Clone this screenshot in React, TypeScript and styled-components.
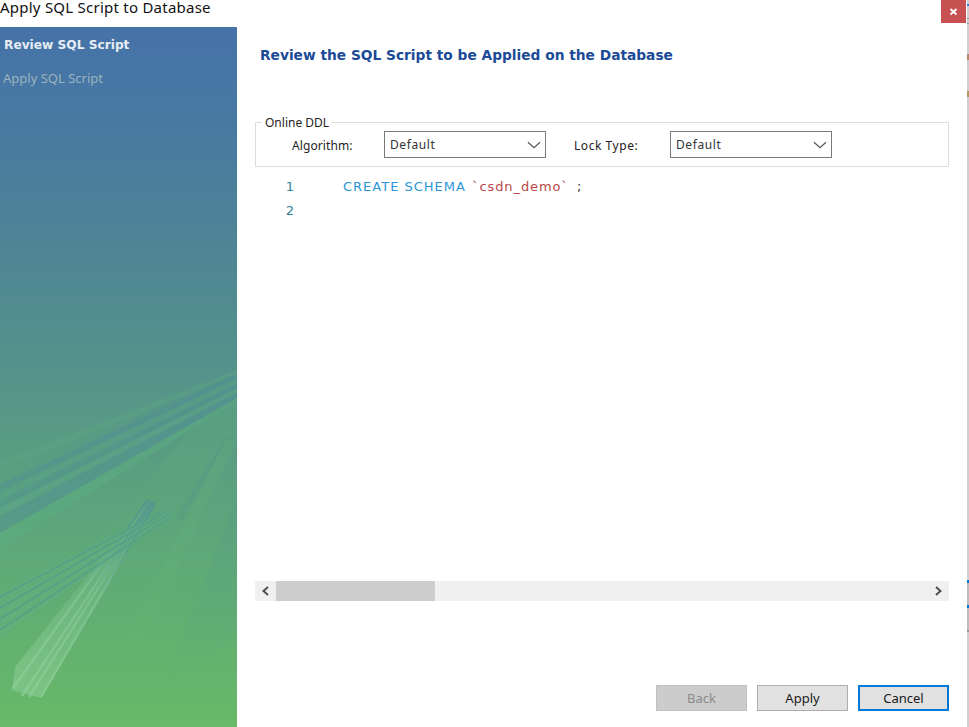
import React from "react";
import styled, { createGlobalStyle } from "styled-components";

const Global = createGlobalStyle`
  html, body { margin: 0; padding: 0; background: #fff; overflow: hidden; }
  body { font-family: "Noto Sans", "Open Sans", "Liberation Sans", sans-serif; }
`;

const Window = styled.div`
  width: 969px;
  height: 727px;
  display: flex;
  background: #fff;
  overflow: hidden;
`;

const Dialog = styled.div`
  flex: 1;
  min-width: 0;
  display: flex;
  flex-direction: column;
`;

const EdgeStrip = styled.div`
  width: 2px;
  flex: none;
  background: linear-gradient(
    180deg,
    #cfcfcf 0 4px, #2f7fc8 4px 6px, #cfcfcf 6px 18px, #9a9a9a 18px 19px, #cfcfcf 19px 23px, #9a9a9a 23px 24px,
    #cfcfcf 24px 54px, #b08a70 54px 60px, #cfcfcf 60px 91px, #b09a60 91px 97px, #cfcfcf 97px 580px,
    #0078d7 580px 583px, #bdbdbd 583px 605px, #0078d7 605px 608px, #bdbdbd 608px 630px, #999 630px 632px, #cfcfcf 632px
  );
`;

const TitleBar = styled.div`
  height: 27px;
  flex: none;
  display: flex;
  justify-content: space-between;
  align-items: flex-start;
`;

const Title = styled.div`
  font-size: 15px;
  line-height: 20px;
  margin-top: -3px;
  color: #111;
  letter-spacing: 0.24px;
  white-space: nowrap;
`;

const CloseButton = styled.div`
  width: 25px;
  height: 23px;
  margin-right: 1px;
  background: #c75050;
  color: #fff;
  display: flex;
  align-items: center;
  justify-content: center;
`;

const Body = styled.div`
  flex: 1;
  display: flex;
  min-height: 0;
`;

const Sidebar = styled.aside`
  width: 237px;
  flex: none;
  position: relative;
  overflow: hidden;
  background: linear-gradient(180deg, #4672a8 0%, #4678a4 10.5%, #4d8496 30%, #56938a 50%, #5fa878 75%, #68b968 100%);
`;

const SideArt = styled.svg`
  position: absolute;
  left: 0;
  top: 0;
  width: 237px;
  height: 700px;
`;

const SideList = styled.div`
  position: relative;
  padding: 8px 0 0 4px;
  display: flex;
  flex-direction: column;
  gap: 13px;
`;

const SideItem = styled.div<{ $active?: boolean }>`
  font-size: ${(p) => (p.$active ? "12.2px" : "13px")};
  line-height: 20px;
  margin-left: ${(p) => (p.$active ? "0" : "-1px")};
  font-family: ${(p) => (p.$active ? '"DejaVu Sans", sans-serif' : "inherit")};
  font-weight: ${(p) => (p.$active ? 700 : 400)};
  color: ${(p) => (p.$active ? "#e6edf3" : "#9db3bd")};
`;

const Main = styled.main`
  flex: 1;
  min-width: 0;
  display: flex;
  flex-direction: column;
  padding: 18px 18px 16px 18px;
`;

const Heading = styled.h1`
  margin: 0 0 0 5px;
  font-family: "DejaVu Sans", sans-serif;
  font-size: 13.75px;
  line-height: 20px;
  font-weight: 700;
  color: #1b4a97;
  white-space: nowrap;
`;

const Fieldset = styled.fieldset`
  margin: 48px 0 0;
  padding: 0;
  height: 54px;
  box-sizing: border-box;
  border: 1px solid #dcdcdc;
  display: flex;
  align-items: flex-start;
`;

const Legend = styled.legend`
  margin-left: 6px;
  padding: 2px 3px 0;
  font-size: 12px;
  line-height: 16px;
  color: #222;
`;

const FieldRow = styled.div`
  display: flex;
  align-items: center;
  padding-left: 36px;
`;

const FieldLabel = styled.span<{ $w: number }>`
  width: ${(p) => p.$w}px;
  font-size: 12px;
  letter-spacing: ${(p) => (p.$w > 92 ? "0.55px" : "0.1px")};
  padding-top: 2px;
  color: #222;
`;

const Select = styled.div`
  width: 162px;
  height: 27px;
  box-sizing: border-box;
  border: 1px solid #7a7a7a;
  padding: 0 4px 0 5px;
  display: flex;
  align-items: center;
  justify-content: space-between;
  font-size: 12px;
  letter-spacing: 0.6px;
  color: #333;
  margin-right: 28px;
`;

const Editor = styled.div`
  flex: 1;
  min-height: 0;
  display: grid;
  grid-template-columns: 39px 1fr;
  column-gap: 49px;
  padding-top: 8px;
  font-family: "DejaVu Sans", sans-serif;
  font-size: 13px;
  line-height: 24px;
`;

const Gutter = styled.div`
  color: #2f8194;
  text-align: right;
`;

const Code = styled.div`
  color: #333;
  white-space: pre;
`;

const Keyword = styled.span`
  color: #2a96d6;
  letter-spacing: 1px;
`;

const Ident = styled.span`
  color: #b84848;
  letter-spacing: 0.9px;
  margin: 0 4px 0 2px;
`;

const ScrollBar = styled.div`
  height: 20px;
  display: flex;
  align-items: stretch;
  background: #f0f0f0;
  flex: none;
`;

const ScrollArrow = styled.div`
  width: 21px;
  display: flex;
  align-items: center;
  justify-content: center;
  color: #505050;
`;

const ScrollThumb = styled.div`
  width: 159px;
  background: #cdcdcd;
`;

const ScrollTrack = styled.div`
  flex: 1;
`;

const Footer = styled.div`
  margin-top: 84px;
  display: flex;
  justify-content: flex-end;
  gap: 10px;
  flex: none;
`;

const Button = styled.div<{ $disabled?: boolean; $focused?: boolean }>`
  width: 91px;
  height: 26px;
  box-sizing: border-box;
  display: flex;
  align-items: center;
  justify-content: center;
  font-size: 13px;
  background: ${(p) => (p.$disabled ? "#cccccc" : "#e1e1e1")};
  color: ${(p) => (p.$disabled ? "#8a8a8a" : "#1a1a1a")};
  border: ${(p) =>
    p.$focused ? "2px solid #0078d7" : p.$disabled ? "1px solid #bfbfbf" : "1px solid #adadad"};
`;

const Chevron = () => (
  <svg width="14" height="8" viewBox="0 0 14 8" fill="none">
    <path d="M1 1.2 L7 6.8 L13 1.2" stroke="#555" strokeWidth="1.2" />
  </svg>
);

const ArtDrawing = () => (
  <SideArt viewBox="0 27 237 700">
    <defs>
      <linearGradient id="strandA" gradientUnits="userSpaceOnUse" x1="20" y1="695" x2="152" y2="500">
        <stop offset="0" stopColor="#8fcf9a" stopOpacity="0.8" />
        <stop offset="0.55" stopColor="#84c698" stopOpacity="0.65" />
        <stop offset="0.8" stopColor="#4f958f" stopOpacity="0.65" />
        <stop offset="1" stopColor="#4f8f92" stopOpacity="0.8" />
      </linearGradient>
      <linearGradient id="bodyA" gradientUnits="userSpaceOnUse" x1="20" y1="695" x2="152" y2="500">
        <stop offset="0" stopColor="#8fcf9a" stopOpacity="0.55" />
        <stop offset="0.6" stopColor="#7fc390" stopOpacity="0.3" />
        <stop offset="1" stopColor="#72b88a" stopOpacity="0.4" />
      </linearGradient>
      <linearGradient id="wedge" gradientUnits="userSpaceOnUse" x1="225" y1="420" x2="80" y2="600">
        <stop offset="0" stopColor="#5fae78" stopOpacity="0.3" />
        <stop offset="1" stopColor="#5fae78" stopOpacity="0" />
      </linearGradient>
      <linearGradient id="fadeDark" gradientUnits="userSpaceOnUse" x1="237" y1="500" x2="170" y2="690">
        <stop offset="0" stopColor="#559a88" stopOpacity="0.3" />
        <stop offset="1" stopColor="#559a88" stopOpacity="0" />
      </linearGradient>
      <linearGradient id="fadeLight" gradientUnits="userSpaceOnUse" x1="230" y1="440" x2="110" y2="690">
        <stop offset="0" stopColor="#68b873" stopOpacity="0.25" />
        <stop offset="1" stopColor="#68b873" stopOpacity="0" />
      </linearGradient>
      <filter id="soft" x="-5%" y="-5%" width="110%" height="110%">
        <feGaussianBlur stdDeviation="0.5" />
      </filter>
    </defs>
    <polygon points="237,402 237,438 226,438 172,520 100,560 60,600 100,537 190,430" fill="url(#wedge)" />
    <polygon points="226,438 176,516 182,522" fill="#559a88" opacity="0.35" />
    <polygon points="237,498 237,640 160,690" fill="url(#fadeDark)" />
    <polygon points="226,440 237,440 120,690 100,690" fill="url(#fadeLight)" />
    <g filter="url(#soft)">
      <polygon points="237,370 237,374 100,430 0,468 0,462" fill="#5ba483" opacity="0.45" />
      <polygon points="237,374 237,378 0,492 0,484" fill="#4f8f96" opacity="0.45" />
      <polygon points="237,378 237,384 0,500 0,492" fill="#58a088" opacity="0.5" />
      <polygon points="237,384 237,388 0,508 0,500" fill="#4f8f96" opacity="0.42" />
      <polygon points="237,388 237,393 0,516 0,508" fill="#5aa488" opacity="0.5" />
      <polygon points="237,393 237,398 0,533 0,516" fill="#4f8f96" opacity="0.45" />
      <polygon points="237,398 237,402 190,430 0,550 0,533" fill="#5cab80" opacity="0.6" />
      <polygon points="15,667 12,690 41,698 155,503 148,500" fill="url(#bodyA)" />
      <g stroke="url(#strandA)" strokeWidth="2.2" fill="none">
        <line x1="13" y1="688" x2="148" y2="500" />
        <line x1="22" y1="696" x2="151" y2="501" />
        <line x1="29" y1="697" x2="153" y2="502" />
        <line x1="41" y1="697" x2="155" y2="503" />
      </g>
      <polygon points="0,592 163,510 173,516 0,637" fill="#62ad82" opacity="0.5" />
      <g stroke="#4f9a8c" strokeWidth="1.8" opacity="0.6" fill="none">
        <line x1="0" y1="597" x2="163" y2="511" />
        <line x1="0" y1="608" x2="166" y2="512" />
        <line x1="0" y1="619" x2="169" y2="514" />
        <line x1="0" y1="630" x2="172" y2="516" />
      </g>
    </g>
  </SideArt>
);

export default function App() {
  return (
    <Window>
      <Global />
      <Dialog>
        <TitleBar>
          <Title>Apply SQL Script to Database</Title>
          <CloseButton>
            <svg width="9" height="9" viewBox="0 0 9 9">
              <path d="M1.5 2 L7.5 7.5 M7.5 2 L1.5 7.5" stroke="#fff" strokeWidth="1.8" />
            </svg>
          </CloseButton>
        </TitleBar>
        <Body>
          <Sidebar>
            <ArtDrawing />
            <SideList>
              <SideItem $active>Review SQL Script</SideItem>
              <SideItem>Apply SQL Script</SideItem>
            </SideList>
          </Sidebar>
          <Main>
            <Heading>Review the SQL Script to be Applied on the Database</Heading>
            <Fieldset>
              <Legend>Online DDL</Legend>
              <FieldRow>
                <FieldLabel $w={92}>Algorithm:</FieldLabel>
                <Select>
                  Default
                  <Chevron />
                </Select>
                <FieldLabel $w={96}>Lock Type:</FieldLabel>
                <Select>
                  Default
                  <Chevron />
                </Select>
              </FieldRow>
            </Fieldset>
            <Editor>
              <Gutter>
                1
                <br />2
              </Gutter>
              <Code>
                <Keyword>CREATE SCHEMA</Keyword> <Ident>`csdn_demo`</Ident> ;
              </Code>
            </Editor>
            <ScrollBar>
              <ScrollArrow>
                <svg width="9" height="10" viewBox="0 0 9 10" fill="none">
                  <path d="M7 1 L2.5 5 L7 9" stroke="currentColor" strokeWidth="2" />
                </svg>
              </ScrollArrow>
              <ScrollThumb />
              <ScrollTrack />
              <ScrollArrow>
                <svg width="9" height="10" viewBox="0 0 9 10" fill="none">
                  <path d="M2 1 L6.5 5 L2 9" stroke="currentColor" strokeWidth="2" />
                </svg>
              </ScrollArrow>
            </ScrollBar>
            <Footer>
              <Button $disabled>Back</Button>
              <Button>Apply</Button>
              <Button $focused>Cancel</Button>
            </Footer>
          </Main>
        </Body>
      </Dialog>
      <EdgeStrip />
    </Window>
  );
}
